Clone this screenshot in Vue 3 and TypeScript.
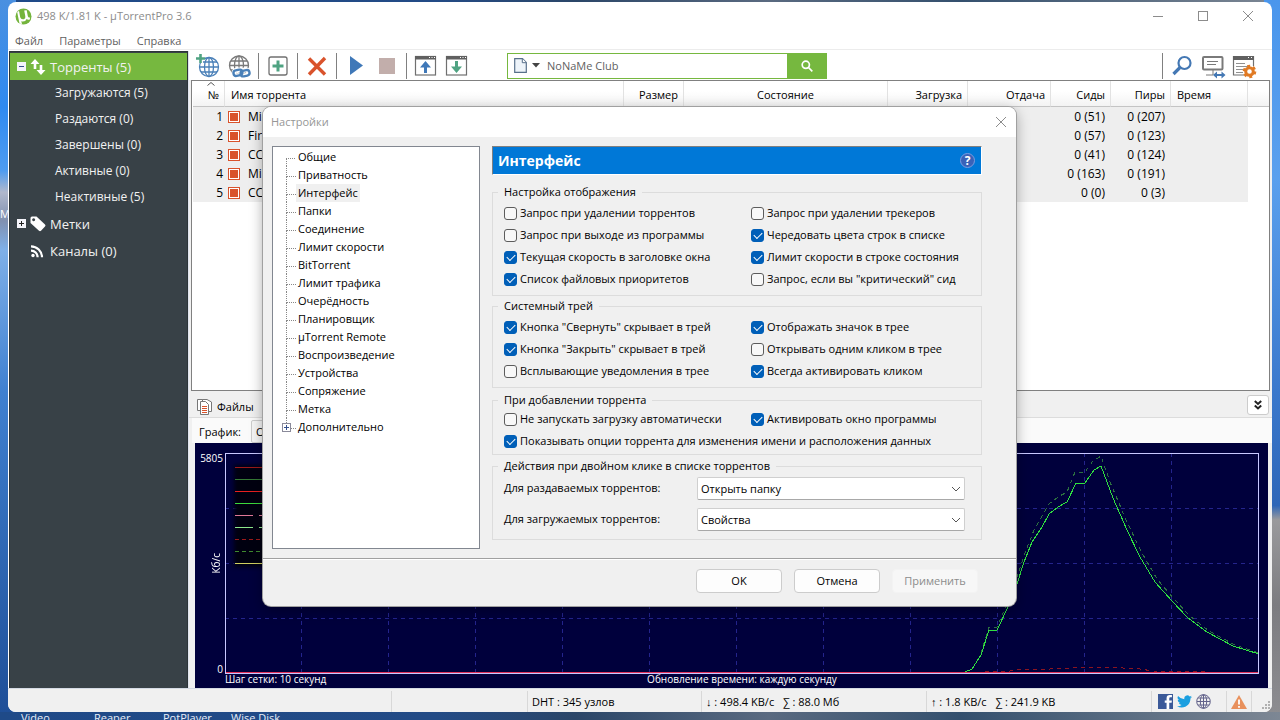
<script setup lang="ts">
import { ref } from 'vue'

interface Torrent {
  id: number
  name: string
  seeds: string
  peers: string
}

interface Option {
  label: string
  checked: boolean
  wide?: boolean
}

interface Group {
  title: string
  tight?: boolean
  options: Option[]
}

const filters: string[] = [
  'Загружаются (5)',
  'Раздаются (0)',
  'Завершены (0)',
  'Активные (0)',
  'Неактивные (5)',
]

const torrents: Torrent[] = [
  { id: 1, name: 'Mi', seeds: '0 (51)', peers: '0 (207)' },
  { id: 2, name: 'Fire', seeds: '0 (57)', peers: '0 (123)' },
  { id: 3, name: 'CC', seeds: '0 (41)', peers: '0 (124)' },
  { id: 4, name: 'Mi', seeds: '0 (163)', peers: '0 (191)' },
  { id: 5, name: 'CC', seeds: '0 (0)', peers: '0 (3)' },
]

const pages: string[] = [
  'Общие',
  'Приватность',
  'Интерфейс',
  'Папки',
  'Соединение',
  'Лимит скорости',
  'BitTorrent',
  'Лимит трафика',
  'Очерёдность',
  'Планировщик',
  'µTorrent Remote',
  'Воспроизведение',
  'Устройства',
  'Сопряжение',
  'Метка',
  'Дополнительно',
]
const activePage = ref('Интерфейс')

const groups = ref<Group[]>([
  {
    title: 'Настройка отображения',
    options: [
      { label: 'Запрос при удалении торрентов', checked: false },
      { label: 'Запрос при удалении трекеров', checked: false },
      { label: 'Запрос при выходе из программы', checked: false },
      { label: 'Чередовать цвета строк в списке', checked: true },
      { label: 'Текущая скорость в заголовке окна', checked: true },
      { label: 'Лимит скорости в строке состояния', checked: true },
      { label: 'Список файловых приоритетов', checked: true },
      { label: 'Запрос, если вы "критический" сид', checked: false },
    ],
  },
  {
    title: 'Системный трей',
    options: [
      { label: 'Кнопка "Свернуть" скрывает в трей', checked: true },
      { label: 'Отображать значок в трее', checked: true },
      { label: 'Кнопка "Закрыть" скрывает в трей', checked: true },
      { label: 'Открывать одним кликом в трее', checked: false },
      { label: 'Всплывающие уведомления в трее', checked: false },
      { label: 'Всегда активировать кликом', checked: true },
    ],
  },
  {
    title: 'При добавлении торрента',
    tight: true,
    options: [
      { label: 'Не запускать загрузку автоматически', checked: false },
      { label: 'Активировать окно программы', checked: true },
      {
        label: 'Показывать опции торрента для изменения имени и расположения данных',
        checked: true,
        wide: true,
      },
    ],
  },
])

const gridX: number[] = [76, 163, 250, 337, 424, 511, 598, 685, 772, 859, 946]
const gridY: number[] = [55, 110, 165]

const legend: { color: string; dash?: string }[] = [
  { color: '#9c1a1a' },
  { color: '#357a35' },
  { color: '#e82020' },
  { color: '#3cd83c' },
  { color: '#e07898', dash: '18 6' },
  { color: '#8ce88c', dash: '18 6' },
  { color: '#9c1a1a', dash: '4 3' },
  { color: '#3f8a2f', dash: '4 3' },
  { color: '#d0d060' },
]

const speed =
  '740,219 747,216 756,202 764,177 772,177 783,154 792,131 799,109 807,89 817,74 824,61 833,54 842,49 851,30 860,30 869,17 876,13 888,45 902,77 915,104 930,129 947,148 963,165 982,179 1008,193 1034,201'
const total =
  '756,200 764,174 772,174 783,148 792,124 800,100 809,77 824,51 833,44 842,39 850,19 860,19 868,8 876,3 885,29 902,69 917,100 932,126 949,146 965,163 984,178 1010,192 1034,200'
const upload = '760,219 785,218 795,216 825,216 865,214 880,214 915,216 928,218 982,219'
</script>

<template>
  <div class="desktop">
    <div class="desk-strip left"></div>
    <div class="desk-strip right"></div>
    <span class="desk-m">M</span>
    <div class="desk-labels">
      <span>Video</span><span>Reaper</span><span>PotPlayer</span><span>Wise Disk</span>
    </div>

    <div class="window">
      <header class="titlebar">
        <svg class="logo" viewBox="0 0 17 17" aria-hidden="true">
          <circle cx="8.5" cy="8.5" r="8" fill="#74b43c" />
          <path d="M4 2.8 L5.2 9.2 Q6 11.8 8.8 11.2 Q10.8 10.600 10.300 8.200 L9.200 2.600 L11.700 2.200 L12.800 8 Q13.100 10 14.800 9.200 L15 11.300 Q12.900 12.500 11.700 11.100 Q10.600 13.600 7.900 13.600 Q6.900 13.600 6.300 13.100 L7 16.300 L4.500 15.600 L2.200 4.200 Z" fill="#fff" />
        </svg>
        <span class="caption">498 K/1.81 K - µTorrentPro 3.6</span>
        <div class="win-buttons">
          <button type="button" aria-label="Свернуть">
            <svg viewBox="0 0 12 12"><path d="M1 6.500H11" /></svg>
          </button>
          <button type="button" aria-label="Развернуть">
            <svg viewBox="0 0 12 12"><rect x="1.500" y="1.500" width="9" height="9" /></svg>
          </button>
          <button type="button" aria-label="Закрыть">
            <svg viewBox="0 0 12 12"><path d="M1 1L11 11M11 1L1 11" /></svg>
          </button>
        </div>
      </header>

      <nav class="menu">
        <button type="button">Файл</button>
        <button type="button">Параметры</button>
        <button type="button">Справка</button>
      </nav>

      <div class="body">
        <nav class="sidebar">
          <a href="#" class="top active">
            <svg class="exp" viewBox="0 0 9 9"><rect width="9" height="9" fill="#f4f4fa" /><path d="M2 4.500H7" stroke="#35508c" /></svg>
            <svg class="side-icon" viewBox="0 0 16 16">
              <path d="M5 0L9.500 5H6.300V10H3.700V5H.500Z M11 16L6.500 11H9.700V6H12.300V11H15.500Z" fill="#fff" />
            </svg>
            <span>Торренты (5)</span>
          </a>
          <a v-for="f in filters" :key="f" href="#" class="sub">{{ f }}</a>
          <a href="#" class="top">
            <svg class="exp" viewBox="0 0 9 9"><rect width="9" height="9" fill="#f4f4fa" /><path d="M2 4.500H7M4.500 2V7" stroke="#222" /></svg>
            <svg class="side-icon" viewBox="0 0 16 16">
              <path fill-rule="evenodd" d="M.500 2Q.500.500 2 .500H6.500L15 8.500Q16 9.500 15 10.500L11 14.800Q10 15.700 9 14.800L.500 7Z M3.600 2.200A1.500 1.500 0 1 0 3.700 2.200Z" fill="#fff" />
            </svg>
            <span>Метки</span>
          </a>
          <a href="#" class="top">
            <span class="exp"></span>
            <svg class="side-icon" viewBox="0 0 16 16" fill="none" stroke="#fff" stroke-width="2.200">
              <circle cx="3" cy="12.500" r="1.700" fill="#fff" stroke="none" />
              <path d="M1 7.700A6.500 6.500 0 0 1 7.600 14.200M1 3.300A11 11 0 0 1 12 14.200" />
            </svg>
            <span>Каналы (0)</span>
          </a>
        </nav>

        <main class="main">
          <div class="toolbar">
            <button type="button" aria-label="Добавить по ссылке">
              <svg viewBox="0 0 24 24" fill="none" stroke="#4a80b8" stroke-width="1.300">
                <circle cx="13" cy="13" r="9.500" />
                <ellipse cx="13" cy="13" rx="4.500" ry="9.500" />
                <path d="M13 3.500V22.500M3.500 13H22.500M5 8H21M5 18H21" />
                <path d="M0 4.500H9M4.500 0V9" stroke="#fff" stroke-width="5" />
                <path d="M0 4.500H9M4.500 0V9" stroke="#4fa382" stroke-width="2.600" />
              </svg>
            </button>
            <button type="button" aria-label="Добавить канал">
              <svg viewBox="0 0 24 24" fill="none" stroke="#7a7a7a" stroke-width="1.300">
                <circle cx="12" cy="11.500" r="9.500" />
                <ellipse cx="12" cy="11.500" rx="4.500" ry="9.500" />
                <path d="M12 2V21M2.500 11.500H21.500M4 7H20M4 16H20" />
                <g stroke="#fff" stroke-width="5"><rect x="7" y="16" width="8" height="6" rx="3" /><rect x="14" y="16" width="8" height="6" rx="3" /></g>
                <g stroke="#4a80b8" stroke-width="2.400"><rect x="6.500" y="16" width="9" height="5.500" rx="2.700" transform="rotate(-12 11 19)" /><rect x="13.500" y="16.500" width="9" height="5.500" rx="2.700" transform="rotate(-12 18 19)" /></g>
              </svg>
            </button>
            <i class="sep"></i>
            <button type="button" aria-label="Добавить торрент">
              <svg viewBox="0 0 24 24" fill="none">
                <rect x="3" y="3" width="18" height="18" rx="2" stroke="#707070" stroke-width="1.300" />
                <path d="M6.500 12H17.500M12 6.500V17.500" stroke="#4fa382" stroke-width="3" />
              </svg>
            </button>
            <i class="sep"></i>
            <button type="button" aria-label="Удалить">
              <svg viewBox="0 0 24 24"><path d="M4 4.500L20 20.500M20 4L4 20.500" stroke="#d9532c" stroke-width="3.400" /></svg>
            </button>
            <i class="sep"></i>
            <button type="button" aria-label="Запустить">
              <svg viewBox="0 0 24 24"><path d="M6 2L19 11.500L6 21Z" fill="#3f78b8" /></svg>
            </button>
            <button type="button" aria-label="Остановить">
              <svg viewBox="0 0 24 24"><rect x="4" y="4" width="16" height="16" fill="#c2aeab" /></svg>
            </button>
            <i class="sep"></i>
            <button type="button" aria-label="Выше">
              <svg viewBox="0 0 24 24">
                <rect x="1.500" y="2.500" width="20" height="18.500" fill="none" stroke="#707070" stroke-width="1.200" />
                <path d="M1 2H22V5.500H1Z" fill="#606060" /><path d="M15 3.500H16M17.500 3.500H18.500M20 3.500H21" stroke="#fff" />
                <path d="M11.500 7L17 13.500H13V19H10V13.500H6Z" fill="#3f78b8" />
              </svg>
            </button>
            <button type="button" aria-label="Ниже">
              <svg viewBox="0 0 24 24">
                <rect x="1.500" y="2.500" width="20" height="18.500" fill="none" stroke="#707070" stroke-width="1.200" />
                <path d="M1 2H22V5.500H1Z" fill="#606060" /><path d="M15 3.500H16M17.500 3.500H18.500M20 3.500H21" stroke="#fff" />
                <path d="M11.500 19L17 12.500H13V7H10V12.500H6Z" fill="#4fa382" />
              </svg>
            </button>
            <div class="search">
              <svg class="page" viewBox="0 0 13 15"><path d="M.7.700H8.500L12.300 4.500V14.300H.700Z" fill="#eef4fa" stroke="#58708c" stroke-width="1.200" /><path d="M8.300.700V4.700H12.300" fill="#fff" stroke="#58708c" /></svg>
              <svg class="drop" viewBox="0 0 8 5"><path d="M0 0H8L4 4.500Z" fill="#444" /></svg>
              <input type="text" value="NoNaMe Club" aria-label="Поиск" />
              <button type="button" aria-label="Найти">
                <svg viewBox="0 0 12 12" fill="none" stroke="#fff" stroke-width="1.700"><circle cx="4.800" cy="4.800" r="3.600" /><path d="M7.500 7.500L11.300 11.300" /></svg>
              </button>
            </div>
            <span class="grow"></span>
            <i class="sep"></i>
            <button type="button" aria-label="Поиск торрентов">
              <svg viewBox="0 0 24 24" fill="none" stroke="#4478b4"><circle cx="14.500" cy="9" r="6" stroke-width="2.200" /><path d="M10 13.500L3.500 20" stroke-width="3.200" /></svg>
            </button>
            <button type="button" aria-label="Удалённый доступ">
              <svg viewBox="0 0 24 24" fill="none" stroke="#7a7a7a">
                <rect x="2" y="3" width="19.500" height="12.500" rx="1" stroke-width="2" /><path d="M6 7.500H17M6 10.500H15M5 21H12V16" stroke-width="1" />
                <path d="M14 21H23" stroke="#4478b4" stroke-width="2" /><path d="M12 21L16 17.500V24.500ZM24.500 21L20.500 17.500V24.500Z" fill="#4478b4" stroke="none" />
              </svg>
            </button>
            <button type="button" aria-label="Настройки">
              <svg viewBox="0 0 24 24" fill="none">
                <path d="M12 21H1.500V2.500H21.500V12" stroke="#707070" stroke-width="1.200" />
                <path d="M1 2H22V6H1Z" fill="#606060" /><path d="M16 3.500H17M19 3.500H20" stroke="#fff" />
                <path d="M4 9.500H13M4 12.500H16M4 15.500H11M4 18.500H11" stroke="#909090" />
                <circle cx="17.500" cy="17.500" r="3.800" stroke="#e07a24" stroke-width="3" />
                <circle cx="17.500" cy="17.500" r="5.600" stroke="#e07a24" stroke-width="2.400" stroke-dasharray="2.900 2.960" />
              </svg>
            </button>
          </div>

          <div class="list">
            <table>
              <colgroup>
                <col class="c-num" /><col /><col class="c-60" /><col class="c-state" /><col class="c-80" />
                <col class="c-83" /><col class="c-60" /><col class="c-60" /><col class="c-time" /><col class="c-rest" />
              </colgroup>
              <thead>
                <tr>
                  <th class="num">
                    <svg class="sort" viewBox="0 0 8 4"><path d="M.500 3.500L4 .500L7.500 3.500" fill="none" stroke="#555" /></svg>№
                  </th>
                  <th class="left">Имя торрента</th>
                  <th>Размер</th>
                  <th class="center">Состояние</th>
                  <th>Загрузка</th>
                  <th>Отдача</th>
                  <th>Сиды</th>
                  <th>Пиры</th>
                  <th class="left">Время</th>
                  <th class="rest"></th>
                </tr>
              </thead>
              <tbody>
                <tr v-for="t in torrents" :key="t.id">
                  <td>{{ t.id }}</td>
                  <td class="name"><i class="state"></i>{{ t.name }}</td>
                  <td></td><td></td><td></td><td></td>
                  <td>{{ t.seeds }}</td>
                  <td>{{ t.peers }}</td>
                  <td></td>
                  <td class="rest"></td>
                </tr>
              </tbody>
            </table>
          </div>

          <div class="tabs">
            <button type="button" class="tab">
              <svg viewBox="0 0 17 17" fill="#fff" stroke="#777">
                <path d="M1.500 1.500H7L9.500 4V12.500H1.500Z" /><path d="M6.500 1.500H11L15.500 4V13.500H6.500Z" />
                <path d="M4.500 3.500H9.500L12.500 6.500V16.500H4.500Z" /><path d="M6 8.500H11M6 10.500H11M6 12.500H11M6 14.500H11" stroke="#d9532c" />
              </svg>
              Файлы
            </button>
            <button type="button" class="collapse" aria-label="Свернуть панель">
              <svg viewBox="0 0 8 10"><path d="M.800 1L4 4L7.200 1M.800 5.500L4 8.500L7.200 5.500" fill="none" stroke="#222" stroke-width="2" /></svg>
            </button>
          </div>

          <div class="graph-bar">
            <label for="graph-kind">График:</label>
            <select id="graph-kind"><option>О</option></select>
          </div>

          <div class="graph">
            <div class="axis">
              <span>5805</span>
              <span class="unit">Кб/с</span>
              <span>0</span>
            </div>
            <div class="plot">
              <svg viewBox="1 1 1032 219" preserveAspectRatio="none" fill="none">
                <g stroke="#24248c" stroke-dasharray="4 4">
                  <path v-for="x in gridX" :key="'x' + x" :d="`M${x}.500 0V220`" />
                  <path v-for="y in gridY" :key="'y' + y" :d="`M0 ${y}.500H1034`" />
                </g>
                <rect class="shade" x="9" y="12" width="140" height="102" fill="#000010" />
                <path v-for="(l, i) in legend" :key="i" :d="`M10 ${14 + i * 12}.500H60`" :stroke="l.color" :stroke-dasharray="l.dash" />
                <g shape-rendering="crispEdges">
                  <polyline :points="total" stroke="#2c7040" stroke-dasharray="4 4" />
                  <polyline :points="upload" stroke="#8c1420" stroke-dasharray="4 4" />
                  <polyline :points="speed" stroke="#30e040" />
                </g>
                <path d="M0 219.500H1034" stroke="#e03058" />
              </svg>
            </div>
            <div class="notes">
              <span>Шаг сетки: 10 секунд</span>
              <span>Обновление времени: каждую секунду</span>
            </div>
          </div>
        </main>
      </div>

      <footer class="status">
        <span class="s-grow"></span>
        <span class="s-blank"></span>
        <span class="s-dht">DHT : 345 узлов</span>
        <span class="s-speed">↓ : 498.4 KB/с &nbsp;&nbsp;∑ : 88.0 Мб</span>
        <span class="s-speed">↑ : 1.8 KB/с &nbsp;&nbsp;∑ : 241.9 KB</span>
        <span class="s-social">
          <svg viewBox="0 0 14 14"><rect width="14" height="14" fill="#3b5998" /><path d="M13 3H11.500Q10.500 3 10.500 4.200V6H13L12.700 8.200H10.500V14H8V8.200H6.300V6H8V4Q8 1 11 1H13Z" fill="#fff" /></svg>
          <svg viewBox="0 0 24 24"><path d="M24 4.600a10 10 0 0 1-2.800.800 5 5 0 0 0 2.100-2.700 10 10 0 0 1-3.100 1.200 4.900 4.900 0 0 0-8.400 4.500A14 14 0 0 1 1.700 3.200a4.900 4.900 0 0 0 1.500 6.500 5 5 0 0 1-2.200-.600 4.900 4.900 0 0 0 4 4.900 5 5 0 0 1-2.300.100 4.900 4.900 0 0 0 4.600 3.400A10 10 0 0 1 0 19.500a14 14 0 0 0 7.500 2.200c9.100 0 14.300-7.700 14-14.600A10 10 0 0 0 24 4.600Z" fill="#1b9fe0" /></svg>
          <svg viewBox="0 0 15 15" fill="none" stroke="#62628a"><circle cx="7.500" cy="7.500" r="6.800" /><ellipse cx="7.500" cy="7.500" rx="3.200" ry="6.800" /><path d="M7.500 1V14M1 7.500H14M2 4H13M2 11H13" /></svg>
        </span>
        <span class="s-warn">
          <svg viewBox="0 0 16 14"><path d="M8 0L16 14H0Z" fill="#e8905c" /><path d="M8 4.500V9.500M8 11V12.700" stroke="#fff" stroke-width="1.800" /></svg>
        </span>
        <span class="s-grip">
          <svg viewBox="0 0 9 9" fill="#b0b0b0"><path d="M6 0H8V2H6ZM3 3H5V5H3ZM6 3H8V5H6ZM0 6H2V8H0ZM3 6H5V8H3ZM6 6H8V8H6Z" /></svg>
        </span>
      </footer>
    </div>

    <section class="dialog" role="dialog" aria-label="Настройки">
      <header class="dlg-title">
        <span>Настройки</span>
        <button type="button" aria-label="Закрыть">
          <svg viewBox="0 0 12 12"><path d="M1 1L11 11M11 1L1 11" /></svg>
        </button>
      </header>

      <div class="dlg-body">
        <ul class="tree">
          <li v-for="(p, i) in pages" :key="p">
            <svg v-if="i === pages.length - 1" class="node" viewBox="0 0 9 9"><rect x=".500" y=".500" width="8" height="8" fill="#fff" stroke="#8a8a9a" /><path d="M2 4.500H7M4.500 2V7" stroke="#35508c" /></svg>
            <button type="button" :class="{ on: p === activePage }" @click="activePage = p">{{ p }}</button>
          </li>
        </ul>

        <div class="panel">
          <h2>
            Интерфейс
            <button type="button" aria-label="Справка">?</button>
          </h2>

          <fieldset v-for="g in groups" :key="g.title" :class="{ tight: g.tight }">
            <legend>{{ g.title }}</legend>
            <div class="options">
              <label v-for="o in g.options" :key="o.label" :class="{ wide: o.wide }">
                <input v-model="o.checked" type="checkbox" />{{ o.label }}
              </label>
            </div>
          </fieldset>

          <fieldset class="actions">
            <legend>Действия при двойном клике в списке торрентов</legend>
            <div class="field">
              <label for="act-seed">Для раздаваемых торрентов:</label>
              <span class="combo">
                <select id="act-seed"><option>Открыть папку</option></select>
                <svg viewBox="0 0 10 6"><path d="M1 1L5 5L9 1" /></svg>
              </span>
            </div>
            <div class="field">
              <label for="act-load">Для загружаемых торрентов:</label>
              <span class="combo">
                <select id="act-load"><option>Свойства</option></select>
                <svg viewBox="0 0 10 6"><path d="M1 1L5 5L9 1" /></svg>
              </span>
            </div>
          </fieldset>
        </div>
      </div>

      <footer class="dlg-footer">
        <button type="button">OK</button>
        <button type="button">Отмена</button>
        <button type="button" disabled>Применить</button>
      </footer>
    </section>
  </div>
</template>

<style>
body {
  margin: 0;
}
</style>

<style scoped>
* {
  box-sizing: border-box;
}
.desktop {
  position: relative;
  display: flex;
  height: 100vh;
  min-height: 620px;
  padding: 2px 8px 8px;
  overflow: hidden;
  background: linear-gradient(90deg, #1f4a88 0, #234b86 34%, #2b4668 45%, #5a6a80 60%, #34506e 75%, #7d8794 100%);
  font-family: 'Open Sans', 'Noto Sans', sans-serif;
  font-size: 11px;
  line-height: 16px;
  color: #000;
}
.desk-strip {
  position: absolute;
  top: 0;
  bottom: 8px;
  width: 16px;
}
.desk-strip.left {
  left: 0;
  background: linear-gradient(#4a90e0 0, #2f8af0 15%, #4f9cf0 24%, #b0b8cc 27%, #8090b0 31%, #7fb0e8 35%, #3f80d0 55%, #1f4f98 100%);
}
.desk-strip.right {
  right: 0;
  background: linear-gradient(#4a96ec 0, #5aa0ee 25%, #3a78cc 55%, #2e66b8 71%, #9a9a9c 73%, #7c7c80 85%, #8c8c90 100%);
}
.desk-m {
  position: absolute;
  left: 0;
  top: 206px;
  color: #fff;
}
.desk-labels {
  position: absolute;
  left: 21px;
  top: 710px;
  display: grid;
  grid-template-columns: 73px 69px 68px auto;
  color: #e8eef8;
}
button,
input,
select {
  font: inherit;
  color: inherit;
  margin: 0;
}
button {
  border: 0;
  background: none;
  padding: 0;
}
a {
  color: inherit;
  text-decoration: none;
}
.window {
  position: relative;
  flex: 1;
  min-width: 0;
  display: flex;
  flex-direction: column;
  background: #fff;
  border-radius: 8px;
  overflow: hidden;
}
.titlebar {
  display: flex;
  align-items: center;
  height: 28px;
  padding: 0 2px 0 7px;
  color: #8c8c8c;
}
.logo {
  width: 17px;
  height: 17px;
  margin-right: 5px;
}
.caption {
  flex: 1;
}
.win-buttons {
  display: flex;
}
.win-buttons button {
  display: grid;
  place-items: center;
  width: 45px;
  height: 28px;
}
.win-buttons svg,
.dlg-title svg {
  width: 12px;
  height: 12px;
  fill: none;
  stroke: #8c8c8c;
}
.menu {
  display: flex;
  gap: 16px;
  height: 20px;
  padding: 3px 7px 0;
  border-bottom: 1px solid #ececec;
  color: #5f5f5f;
}
.menu button {
  height: 16px;
}
.body {
  flex: 1;
  min-height: 0;
  display: flex;
  padding: 1px 0 0 1px;
}
.sidebar {
  width: 179px;
  flex: none;
  padding-top: 1px;
  background: #384147;
  border: 1px solid #2c3438;
  border-bottom: 0;
  color: #f2f2f2;
  font-size: 12px;
}
.sidebar a {
  display: flex;
  align-items: center;
  height: 26px;
}
.sidebar .top {
  height: 27px;
  padding-left: 7px;
  font-size: 13px;
}
.sidebar .active {
  background: #76b83f;
}
.sidebar .sub {
  padding-left: 45px;
}
.exp {
  width: 9px;
  height: 9px;
}
.side-icon {
  width: 16px;
  height: 16px;
  margin: 0 4px;
}
.main {
  flex: 1;
  min-width: 0;
  display: flex;
  flex-direction: column;
  background: #f0f0f0;
  border-left: 1px solid #dfe3ee;
}
.toolbar {
  display: flex;
  align-items: center;
  height: 29px;
  padding: 0 13px 0 3px;
  background: #fff;
}
.toolbar > button {
  display: grid;
  place-items: center;
  width: 31px;
  height: 28px;
}
.toolbar > button svg {
  width: 24px;
  height: 24px;
  overflow: visible;
}
.sep {
  width: 8px;
  height: 26px;
  background: linear-gradient(#808080, #808080) center / 1px 100% no-repeat;
}
.grow {
  flex: 1;
}
.search {
  display: flex;
  align-items: center;
  width: 320px;
  height: 26px;
  margin-left: 35px;
  border: 1px solid #76b83f;
  background: #fff;
}
.page {
  width: 13px;
  height: 15px;
  margin: 0 5px 0 6px;
}
.drop {
  width: 8px;
  height: 5px;
}
.search input {
  flex: 1;
  min-width: 0;
  padding: 0 7px;
  border: 0;
  outline: 0;
  background: none;
  color: #5f5f5f;
}
.search button {
  display: grid;
  place-items: center;
  width: 39px;
  height: 26px;
  background: #76b83f;
}
.search button svg {
  width: 12px;
  height: 12px;
}
.list {
  flex: 1;
  min-height: 0;
  margin: 0 2px 0 2px;
  padding-left: 1px;
  overflow: hidden;
  border: 1px solid #808080;
  background: #fff;
}
table {
  width: 100%;
  table-layout: fixed;
  border-collapse: separate;
  border-spacing: 0;
}
.c-num { width: 32px; }
.c-60 { width: 60px; }
.c-state { width: 204px; }
.c-80 { width: 80px; }
.c-83 { width: 83px; }
.c-time { width: 77px; }
.c-rest { width: 21px; }
th {
  position: relative;
  height: 26px;
  padding: 2px 5px 0;
  font-weight: 400;
  text-align: right;
  background: linear-gradient(#fff 40%, #f3f3f3);
  border-right: 1px solid #e2e2e2;
  border-bottom: 1px solid #c4c4c4;
}
th.left {
  padding-left: 6px;
  text-align: left;
}
th.center {
  text-align: center;
}
th.rest {
  border-right: 0;
}
.sort {
  position: absolute;
  right: 9px;
  top: 1px;
  width: 8px;
  height: 4px;
}
td {
  height: 19px;
  padding: 0 6px 0 0;
  font-size: 12px;
  line-height: 19px;
  text-align: right;
  background: #eee;
}
td:first-child {
  padding-right: 2px;
}
td.rest {
  background: #fff;
}
td.name {
  padding-left: 3px;
  text-align: left;
}
.state {
  display: inline-block;
  width: 12px;
  height: 12px;
  margin-right: 8px;
  vertical-align: -2px;
  border: 1px solid #d9532c;
  background: #d9532c;
  box-shadow: inset 0 0 0 1px #fff;
}
.tabs {
  display: flex;
  justify-content: space-between;
  align-items: center;
  height: 27px;
  padding: 2px 3px 0 7px;
  border-bottom: 1px solid #dcdcdc;
}
.tab {
  display: flex;
  align-items: center;
  gap: 4px;
  padding: 3px 6px 0 0;
}
.tab svg {
  width: 17px;
  height: 17px;
}
.collapse {
  display: grid;
  place-items: center;
  width: 22px;
  height: 20px;
  border: 1px solid #ccc;
  border-radius: 3px;
  background: #fff;
}
.collapse svg {
  width: 8px;
  height: 10px;
}
.graph-bar {
  display: flex;
  align-items: center;
  gap: 10px;
  height: 25px;
  margin-left: 3px;
  padding: 2px 0 0 7px;
  background: #fafafa;
}
.graph-bar select {
  width: 140px;
  height: 23px;
  padding: 0 4px;
  appearance: none;
  border: 1px solid #ccc;
  border-radius: 2px;
  background: #f6f6f6;
}
.graph {
  display: grid;
  grid-template-columns: 30px 1fr;
  grid-template-rows: 221px 1fr;
  height: 245px;
  margin: 0 4px 0 6px;
  padding: 10px 9px 0 0;
  background: #00003c;
  color: #fff;
  font-size: 10px;
  line-height: 10px;
}
.axis {
  display: flex;
  flex-direction: column;
  justify-content: space-between;
  align-items: flex-end;
  padding-right: 2px;
}
.unit {
  writing-mode: vertical-rl;
  rotate: 180deg;
  margin-right: 2px;
}
.plot {
  border: 1px solid #c8c8ff;
}
.plot svg {
  display: block;
  width: 100%;
  height: 100%;
}
.plot path,
.plot polyline {
  vector-effect: non-scaling-stroke;
}
.shade {
  filter: blur(2px);
}
.notes {
  grid-column: 2;
  display: grid;
  grid-template-columns: 1fr auto 1fr;
}
.status {
  display: flex;
  height: 24px;
  background: #f0f0f0;
  border-top: 1px solid #d4dae4;
}
.status span {
  display: flex;
  align-items: center;
  margin-top: 2px;
  padding-left: 4px;
  border-left: 1px solid #d8d8d8;
}
.status .s-grow {
  flex: 1;
  border: 0;
}
.s-blank { width: 136px; }
.s-dht { width: 174px; }
.s-speed { width: 225px; }
.status .s-social {
  width: 75px;
  gap: 4px;
  padding-left: 6px;
}
.s-social svg {
  width: 15px;
  height: 15px;
}
.s-warn { width: 25px; }
.s-warn svg {
  width: 16px;
  height: 14px;
}
.status .s-grip {
  width: 21px;
  align-items: flex-end;
  padding: 0 0 2px 10px;
}
.s-grip svg {
  width: 9px;
  height: 9px;
}

.dialog {
  position: absolute;
  left: 263px;
  top: 107px;
  width: 753px;
  border-radius: 8px;
  background: #f0f0f0;
  box-shadow: 0 0 0 1px #a0a0a0, 0 4px 14px rgba(0, 0, 0, 0.35);
  overflow: hidden;
}
.dlg-title {
  display: flex;
  justify-content: space-between;
  align-items: center;
  height: 30px;
  padding: 0 9px 0 8px;
  background: #fff;
  color: #969696;
}
.dlg-title button {
  display: grid;
  place-items: center;
  height: 28px;
}
.dlg-body {
  display: flex;
  gap: 12px;
  padding: 9px 34px 9px 9px;
}
.tree {
  width: 208px;
  flex: none;
  margin: 0;
  padding: 1px 0 0 13px;
  border: 1px solid #828790;
  background: #fff;
  list-style: none;
}
.tree li {
  position: relative;
  display: flex;
  height: 18px;
  padding-left: 10px;
}
.tree li::before {
  content: '';
  position: absolute;
  left: 0;
  top: 0;
  width: 9px;
  height: 10px;
  border-left: 1px dotted #888;
  border-bottom: 1px dotted #888;
}
.tree li:not(:last-child)::after {
  content: '';
  position: absolute;
  left: 0;
  top: 10px;
  height: 8px;
  border-left: 1px dotted #888;
}
.tree li:first-child::before {
  border-left: 0;
}
.node {
  position: absolute;
  left: -4px;
  top: 5px;
  width: 9px;
  height: 9px;
}
.tree button {
  padding: 0 2px;
  line-height: 18px;
}
.tree button.on {
  background: #f0f0f0;
}
.panel {
  flex: 1;
  min-width: 0;
  padding-bottom: 9px;
}
h2 {
  display: flex;
  justify-content: space-between;
  align-items: center;
  height: 29px;
  margin: 0 0 9px;
  padding: 0 6px 0 5px;
  border: 1px solid #808080;
  border-right-color: #fff;
  border-bottom-color: #fff;
  background: #0078d7;
  color: #fff;
  font-size: 14px;
  font-weight: 700;
}
h2 button {
  width: 15px;
  height: 15px;
  border: 1px solid #7a9ce0;
  border-radius: 50%;
  background: #3a62b8;
  color: #fff;
  font-size: 12px;
  line-height: 12px;
  font-weight: 700;
}
fieldset {
  min-width: 0;
  margin: 0 0 2px;
  padding: 2px 0 5px 11px;
  border: 1px solid #dcdcdc;
}
legend {
  margin-left: -6px;
  padding: 0 6px;
  line-height: 16px;
}
fieldset.tight {
  margin: 4px 0 3px;
  padding: 0 0 2px 11px;
}
.options {
  display: grid;
  grid-template-columns: 247px 1fr;
}
.options label {
  display: flex;
  align-items: center;
  gap: 3px;
  height: 22px;
  white-space: nowrap;
}
.options .wide {
  grid-column: 1 / -1;
}
input[type='checkbox'] {
  position: relative;
  appearance: none;
  width: 13px;
  height: 13px;
  flex: none;
  border: 1px solid #5c5c5c;
  border-radius: 3px;
  background: #f8f8f8;
}
input[type='checkbox']:checked {
  border-color: #005fb8;
  background: #005fb8;
}
input[type='checkbox']:checked::after {
  content: '';
  position: absolute;
  left: 2px;
  top: 2px;
  width: 7px;
  height: 4px;
  border-left: 1px solid #fff;
  border-bottom: 1px solid #fff;
  rotate: -45deg;
}
fieldset.actions {
  margin: 0;
  padding: 3px 16px 8px 11px;
}
.field {
  display: flex;
  justify-content: space-between;
  height: 23px;
}
.field + .field {
  margin-top: 8px;
}
.field label {
  line-height: 22px;
}
.combo {
  display: grid;
  align-items: center;
  width: 268px;
}
.combo select,
.combo svg {
  grid-area: 1 / 1;
}
.combo select {
  width: 100%;
  height: 23px;
  padding: 0 3px;
  appearance: none;
  border: 1px solid #cfcfcf;
  border-bottom-color: #a8a8a8;
  border-radius: 2px;
  background: #fff;
}
.combo svg {
  justify-self: end;
  width: 10px;
  height: 6px;
  margin-right: 4px;
  fill: none;
  stroke: #555;
  pointer-events: none;
}
.dlg-footer {
  display: flex;
  justify-content: flex-end;
  gap: 12px;
  padding: 10px 38px 13px;
  border-top: 1px solid #a0a0a0;
  box-shadow: inset 0 1px #fff;
}
.dlg-footer button {
  width: 86px;
  height: 24px;
  border: 1px solid #ccc;
  border-radius: 4px;
  background: #fdfdfd;
}
.dlg-footer button:disabled {
  border-color: #f3f3f3;
  background: #f7f7f7;
  color: #8c8c8c;
}
</style>
